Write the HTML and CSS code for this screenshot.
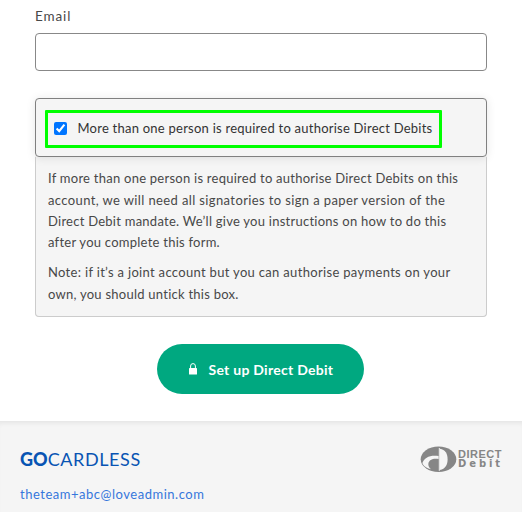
FILE: index.html
```html
<!DOCTYPE html>
<html lang="en">
<head>
    <meta charset="UTF-8">
    <meta name="viewport" content="width=device-width, initial-scale=1.0">
    <title>Set up Direct Debit</title>
    <link rel="stylesheet" href="styles.css">
</head>
<body>
    <form class="mandate-form">
        <label class="field-label" for="email">Email</label>
        <input class="field-input" type="email" id="email">

        <div class="signatories">
            <div class="signatories-header">
                <label class="highlight">
                    <input class="checkbox" type="checkbox" checked>
                    <span class="checkbox-text">More than one person is required to authorise Direct Debits</span>
                </label>
            </div>
            <div class="signatories-info">
                <p>If more than one person is required to authorise Direct Debits on this<br>
                <span class="wide">account, we will need all signatories to sign a paper version of the</span><br>
                Direct Debit mandate. We’ll give you instructions on how to do this<br>
                after you complete this form.</p>
                <p><span class="medium">Note: if it’s a joint account but you can authorise payments on your</span><br>
                own, you should untick this box.</p>
            </div>
        </div>

        <button class="submit" type="button">
            <svg class="lock" width="8" height="12" viewBox="0 0 8 12">
                <path d="M1.6 5.5V3a2.4 2.4 0 0 1 4.8 0v2.5" fill="none" stroke="#fff" stroke-width="1"/>
                <rect x="0" y="5" width="8" height="6.6" rx="0.6" fill="#fff"/>
            </svg>
            <span class="submit-text">Set up Direct Debit</span>
        </button>
    </form>

    <footer class="footer">
        <div class="brands">
            <div class="gocardless"><b>GO</b><span>CARDLESS</span></div>
            <div class="direct-debit">
                <svg width="37" height="27" viewBox="0 0 37 27">
                    <ellipse cx="18.5" cy="13.3" rx="17.8" ry="12.8" fill="#868686"/>
                    <path d="M19.8 2.8C25.4 3.4 27.6 8 27.6 13.3S25.4 23.2 19.8 24Z" fill="#f5f5f5"/>
                    <path d="M2.4 17C4.2 11.5 10 8.8 18.6 10V13C13.5 11.8 9.2 13.6 8.4 17.2C8 19.6 9 21.8 11 23.2C6.5 22.1 3.2 20 2.4 17Z" fill="#f5f5f5"/>
                    <path d="M19.3 2V24.8" stroke="#f5f5f5" stroke-width="1"/>
                </svg>
                <div class="direct-debit-name">
                    <span class="direct">DIRECT</span>
                    <span class="debit">Debit</span>
                </div>
            </div>
        </div>
        <a class="contact">theteam+abc@loveadmin.com</a>
    </footer>
</body>
</html>
```

FILE: styles.css
```css
* {
    box-sizing: border-box;
    margin: 0;
    padding: 0;
}

body {
    font-family: Lato, sans-serif;
    font-size: 13px;
    color: #484848;
    background-color: #fff;
    overflow: hidden;
}

.mandate-form {
    display: flex;
    flex-direction: column;
    height: 421px;
    padding: 6px 35px 0;
}

.field-label {
    font-size: 13.5px;
    line-height: 20px;
    letter-spacing: 0.9px;
}

.field-input {
    height: 38px;
    margin-top: 7px;
    border: 1px solid #888;
    border-radius: 4px;
}

.signatories {
    height: 219px;
    margin-top: 27px;
    background-color: #f5f5f5;
    border-radius: 4px;
}

.signatories-header {
    height: 59px;
    padding: 11px 9px;
    border: 1px solid #808080;
    border-radius: 4px;
    box-shadow: 0 1px 10px rgba(0, 0, 0, 0.1);
}

.highlight {
    display: flex;
    align-items: center;
    width: 397px;
    height: 38px;
    padding: 0 0 2px 6px;
    border: 3px solid #00ff00;
    border-radius: 1px;
}

.checkbox {
    width: 13px;
    height: 13px;
}

.checkbox-text {
    margin-left: 10.5px;
    line-height: 20px;
    color: #333;
    letter-spacing: 0.24px;
    white-space: nowrap;
}

.signatories-info {
    height: 160px;
    padding: 11.3px 11px 0 12px;
    border: 1px solid #ccc;
    border-top: none;
    border-radius: 0 0 4px 4px;
    line-height: 21.3px;
    letter-spacing: 0.25px;
    white-space: nowrap;
}

.signatories-info p {
    margin-bottom: 9px;
}

.wide {
    letter-spacing: 0.38px;
}

.medium {
    letter-spacing: 0.32px;
}

.submit {
    display: flex;
    align-items: center;
    width: 207px;
    height: 50px;
    margin: 27px 0 0 122px;
    padding-left: 32px;
    border: none;
    border-radius: 25px;
    background-color: #00a880;
    color: #fff;
    font: bold 14px Lato, sans-serif;
    white-space: nowrap;
}

.submit-text {
    margin-left: 11.5px;
    letter-spacing: 0.27px;
}

.footer {
    height: 91px;
    padding: 22px 19px 0 20px;
    background-color: #f5f5f5;
    box-shadow: inset 0 5px 5px -3px rgba(0, 0, 0, 0.07);
}

.brands {
    display: flex;
    justify-content: space-between;
    height: 32px;
}

.gocardless {
    font-size: 18px;
    line-height: 32px;
    color: #0854b3;
}

.gocardless b {
    font-weight: 900;
}

.gocardless span {
    letter-spacing: 0.6px;
}

.direct-debit {
    display: flex;
    align-items: center;
    width: 83px;
    color: #868686;
}

.direct-debit svg {
    flex: none;
}

.direct-debit-name {
    display: flex;
    flex-direction: column;
    padding-left: 1px;
    font-weight: bold;
    line-height: 9px;
}

.direct {
    font-family: "Liberation Sans", sans-serif;
    font-size: 11px;
    letter-spacing: 0.5px;
}

.debit {
    font-family: "DejaVu Sans", sans-serif;
    font-size: 10px;
    letter-spacing: 2.9px;
}

.contact {
    display: block;
    margin-top: 9px;
    line-height: 20px;
    color: #3577dc;
    letter-spacing: 0.52px;
}
```
